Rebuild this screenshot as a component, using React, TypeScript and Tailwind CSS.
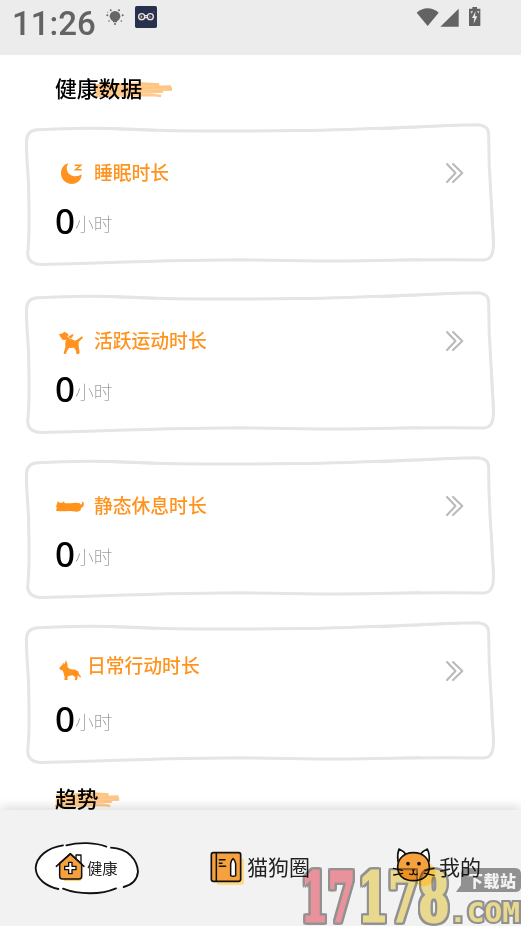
import type { ReactNode } from "react";

const cjk = "font-['Noto_Sans_CJK_SC',sans-serif]";

const MoonIcon = () => (
    <svg viewBox="123 129 90 90" className="h-[30px] w-[30px]" fill="#ff931e">
        <path d="M161 145C152 155 154 171 164 178C175 187 191 185 200 178C200 195 187 207 170 207C152 207 138 193 138 175C138 159 148 147 161 145Z" />
        <path d="M179 151H197L182 164H200" fill="none" stroke="#ff931e" strokeWidth="4.5" />
    </svg>
);

const RunningDogIcon = () => (
    <svg viewBox="123 123 90 90" className="h-[30px] w-[30px]" fill="#ff931e">
        <path d="M132 148L143 145L148 140L159 146L161 155L154 164L143 165L137 157Z" />
        <path d="M155 160L172 147L176 150L168 161L180 167L186 164L201 154L204 158L191 171L191 182L194 203L190 208L184 206L183 197L177 188L162 189L156 198L153 206L147 207L146 203L151 187L151 172Z" />
        <path d="M156 153L168 163" stroke="#fff" strokeWidth="2" />
    </svg>
);

const LyingCatIcon = () => (
    <svg viewBox="123 123 90 90" className="h-[30px] w-[30px]" fill="#ff931e">
        <path d="M126 161L128 154L134 158L142 158L147 154L149 160L166 160L184 158L194 160L198 164Q204 162 200 155L205 156Q209 163 204 170L198 175L196 182L186 185L166 183L149 184L136 184L125 183L123 179L126 174L123 170Z" />
    </svg>
);

const WalkingDogIcon = () => (
    <svg viewBox="123 123 90 90" className="h-[30px] w-[30px]" fill="#ff931e">
        <path d="M133 158L142 149L146 143L149 147L153 135L157 146L158 157L165 162L181 164L189 169L192 176L198 185L196 188L189 181L186 195L179 196L181 187L173 181L160 183L157 187L158 195L148 195L149 187L145 171L142 166L135 164Z" />
    </svg>
);

const Chevrons = () => (
    <svg
        width="20"
        height="22"
        viewBox="0 0 20 22"
        fill="none"
        stroke="#b9b9b9"
        strokeWidth="2"
        strokeLinecap="round"
        strokeLinejoin="round"
    >
        <path d="M3 2L11.5 11L3 20" />
        <path d="M9 2L18.3 11L9 20" />
    </svg>
);

const CardFrame = () => (
    <svg
        viewBox="24 122 471 145"
        className="absolute inset-0 h-full w-full"
        fill="none"
        stroke="#e5e5e5"
        strokeLinejoin="round"
        strokeLinecap="round"
    >
        <path
            strokeWidth="3"
            d="M26.5 140Q27 130.5 38 129.8C70 127.7 110 128 140 129.5C190 132 260 131 300 130.5C350 130 410 127 455 125.3L476 124.7Q488 125 488.6 133C488.7 170 490.5 190 491.5 205C491.8 225 494 235 493.3 248Q492.5 259.5 484 260L450 259.7C400 259.5 360 261 320 261L240 259.7C190 260 120 262 80 263.4L40 264.5Q27.5 263.5 27.7 253C30 230 29 210 28.7 195C29 175 26 160 26.5 140Z"
        />
        <path strokeWidth="1.5" d="M100 129L155 131M380 129.5L460 125.5M492 200L494 245M330 261.5L420 259" />
    </svg>
);

const Brush = ({ className }: { className: string }) => (
    <svg viewBox="0 0 80 18" preserveAspectRatio="none" className={`absolute ${className}`} fill="none">
        <path d="M1 5L49 3L66 4M2 8L78 6M1 10L79 8M2 13L70 10" stroke="#ffc582" strokeWidth="3.6" />
        <path d="M0 15L60 14L68 15M8 12L60 11" stroke="#ffca8e" strokeWidth="2.5" />
        <path d="M20 6L62 5M48 9L74 8M45 13L62 12" stroke="#ffdcb3" strokeWidth="0.5" />
    </svg>
);

type Item = {
    label: string;
    icon: ReactNode;
    labelClass: string;
};

const first: Item = { label: "睡眠时长", icon: <MoonIcon />, labelClass: "ml-2 pb-0.5" };

const rest: Item[] = [
    { label: "活跃运动时长", icon: <RunningDogIcon />, labelClass: "ml-2 pb-0.5" },
    { label: "静态休息时长", icon: <LyingCatIcon />, labelClass: "ml-2 pb-0.5" },
    { label: "日常行动时长", icon: <WalkingDogIcon />, labelClass: "ml-px pb-3" },
];

const DataCard = ({ item }: { item: Item }) => (
    <div className="relative h-[145px] w-[471px] pt-9 pr-[31px] pl-8">
        <CardFrame />
        <div className="flex h-[30px] items-center">
            {item.icon}
            <span className={`text-[18.8px] leading-[30px] font-medium text-[#ff931e] ${item.labelClass}`}>
                {item.label}
            </span>
            <span className="ml-auto">
                <Chevrons />
            </span>
        </div>
        <div className="mt-[13px] flex h-10 items-start">
            <span className="w-[19px] font-['Noto_Sans',sans-serif] text-[35px] leading-10 font-medium text-black">
                <span className="-ml-px">0</span>
            </span>
            <span className="mt-1 text-[18.7px] leading-9 font-thin text-[#777]">小时</span>
        </div>
    </div>
);

const StatusBar = () => (
    <header className="flex h-[55px] items-start bg-[#ececec] pl-3 text-[#636363]">
        <span className="mt-1 w-[94px] font-['Roboto',sans-serif] text-[33px] leading-[39px] font-medium">11:26</span>
        <svg width="18" height="18" viewBox="0 0 54 54" className="mt-2" fill="#666">
            <circle cx="27" cy="25" r="16" />
            <path d="M21 38H33V43H21ZM24 46H30V50H24Z" />
            <g>
                <circle cx="14" cy="7" r="3" />
                <circle cx="39" cy="7" r="3" />
                <circle cx="4" cy="22" r="3" />
                <circle cx="50" cy="22" r="3" />
                <circle cx="9" cy="39" r="2.5" />
                <circle cx="46" cy="39" r="2.5" />
                <circle cx="5" cy="13" r="1.5" />
            </g>
        </svg>
        <svg width="22" height="22" viewBox="0 0 66 66" className="mt-[6px] ml-[11px]">
            <rect width="66" height="66" rx="5" fill="#29304d" />
            <g fill="none" stroke="#e8e8e8" strokeWidth="4">
                <circle cx="20" cy="32" r="9" />
                <circle cx="46" cy="32" r="9" />
                <path d="M29 29H37M29 35H37" />
            </g>
            <path d="M17 27L23 32L17 38Z" fill="#e8c65b" />
            <path d="M43 28L50 33L43 37Z" fill="#c46b79" />
            <path d="M54 20L57 17" stroke="#aaa" strokeWidth="2" />
        </svg>
        <svg width="68" height="24" viewBox="48 18 204 72" className="mt-1.5 mr-[37px] ml-auto" fill="#636363">
            <path d="M50 38C68 20 98 20 116 38L83 78Z" />
            <path d="M176 26V80H121Z" />
            <path d="M217 21H231V26H241V78H207V26H217Z" />
            <path d="M227 34L216 54H223L221 71L232 49H225Z" fill="#ececec" />
            <path d="M211 34L219 33L215 42ZM231 34L238 32L236 41Z" fill="#cfcfcf" />
        </svg>
    </header>
);

const HouseIcon = () => (
    <svg width="30" height="30" viewBox="105 217 90 90" strokeLinejoin="round" strokeLinecap="round">
        <path d="M127 286H181L187 280V297Q184 304 176 304H133Z" fill="#ffd36b" />
        <path d="M168 245V226H183V258" fill="#fff" stroke="#111" strokeWidth="4" />
        <path d="M119 251L151 223L185 253V290Q185 298 177 298H127Q119 298 119 290Z" fill="#f6a13e" stroke="#111" strokeWidth="4.5" />
        <path d="M109 260L151 222L192 260" fill="none" stroke="#111" strokeWidth="4.5" />
        <path
            d="M146 248H156V260H168V270H156V282H146V270H134V260H146Z"
            fill="#fff"
            stroke="#111"
            strokeWidth="4"
        />
    </svg>
);

const BookIcon = () => (
    <svg width="35" height="42" viewBox="30 62 105 126" strokeLinecap="round">
        <rect x="50" y="84" width="82" height="80" rx="8" fill="#ffdc82" />
        <rect x="34" y="67" width="88" height="86" rx="6" fill="#f6a13e" stroke="#111" strokeWidth="5" />
        <path d="M49 68V152M58 88H75M58 99H66M58 108H77" stroke="#111" strokeWidth="4.5" />
        <path d="M92 136V100Q94 89 99 85Q105 89 107 100V136Q100 140 92 136Z" fill="#fff" stroke="#111" strokeWidth="4.5" />
    </svg>
);

const CatIcon = () => (
    <svg width="44" height="40" viewBox="304 22 132 120" strokeLinecap="round" strokeLinejoin="round">
        <circle cx="398" cy="102" r="37" fill="#ffdc82" />
        <path d="M322 66Q319 45 325 28Q339 34 347 45M388 45Q398 33 410 28Q418 45 415 66" fill="#fff" stroke="#111" strokeWidth="5" />
        <path d="M368 39C402 39 416 61 416 82C416 108 396 123 368 123C340 123 321 108 321 82C321 61 336 39 368 39Z" fill="#f6a13e" stroke="#111" strokeWidth="5" />
        <path d="M308 86L335 92M309 106L336 101M403 92L430 86M402 101L430 107" stroke="#111" strokeWidth="4" />
        <circle cx="352" cy="72" r="5.5" fill="#111" />
        <circle cx="385" cy="72" r="5.5" fill="#111" />
        <path d="M368 91V100Q365 108 357 103M368 100Q372 108 380 103" fill="none" stroke="#111" strokeWidth="4" />
        <path d="M363 90H373L368 96Z" fill="#111" />
    </svg>
);

const Watermark = () => (
    <svg
        viewBox="290 840 231 86"
        className="pointer-events-none absolute right-0 bottom-0 h-[86px] w-[231px] mix-blend-multiply"
    >
        {/* thick fill, then a grey outline made of four hard shadows */}
        <g
            className="[filter:drop-shadow(2px_0_0_#999)_drop-shadow(-2px_0_0_#999)_drop-shadow(0_2px_0_#999)_drop-shadow(0_-2px_0_#999)]"
            fontFamily="'DejaVu Serif', serif"
            fontWeight="bold"
            fontSize="67"
            strokeWidth="3"
        >
            <text x="301" y="921" textLength="54" lengthAdjust="spacingAndGlyphs" fill="#f79aa3" stroke="#f79aa3">
                17
            </text>
            <text x="358" y="921" textLength="91" lengthAdjust="spacingAndGlyphs" fill="#f6e597" stroke="#f6e597">
                178
            </text>
        </g>
        <text
            x="449"
            y="922"
            fontFamily="'DejaVu Sans Mono', monospace"
            fontWeight="bold"
            fontSize="26"
            textLength="71"
            lengthAdjust="spacingAndGlyphs"
            fill="#f6e597"
            stroke="#999"
            strokeWidth="4"
            paintOrder="stroke"
        >
            .COM
        </text>
        <path d="M467 868H515Q521 868 521 874V887Q521 892 515 892H456L461 885V874Q461 868 467 868Z" fill="#999" />
        <text
            x="467"
            y="887"
            fontFamily="'Noto Sans CJK SC', sans-serif"
            fontWeight="900"
            fontSize="16"
            textLength="49"
            fill="#fff"
        >
            下载站
        </text>
    </svg>
);

const TabBar = () => (
    <nav className="relative flex h-[116px] shrink-0 items-start bg-[#f2f2f2] text-[#222] shadow-[0_-3px_10px_rgba(0,0,0,0.14)]">
        <div className="relative mt-[31px] ml-[34px] flex h-[54px] w-[106px] items-center">
            <svg viewBox="42 183 318 162" className="absolute inset-0 h-full w-full" fill="none">
                <path
                    d="M138 195C180 184 240 190 270 200C320 200 354 235 354 275C354 300 330 320 288 325C240 345 175 343 128 330C80 327 48 300 47 265C48 225 95 195 138 195Z"
                    fill="#fff"
                />
                <path
                    d="M129 196C80 203 49 232 47 264C48 297 80 320 115 327M139 196C180 185 228 188 259 200M273 203C325 205 352 240 354 275C352 297 338 314 311 321M288 325C243 345 176 344 129 326"
                    stroke="#111"
                    strokeWidth="5.5"
                    strokeLinecap="round"
                />
            </svg>
            <div className="relative mb-0.5 ml-[21px] flex items-center">
                <HouseIcon />
                <span className="ml-[2px] text-[15.3px] leading-6">健康</span>
            </div>
        </div>
        <div className="mt-[41px] ml-[70px] flex">
            <BookIcon />
            <span className="-mt-px ml-[2px] text-[21px] leading-8">猫狗圈</span>
        </div>
        <div className="mt-[37px] ml-[82px] flex">
            <CatIcon />
            <span className="mt-[3px] ml-[3px] text-[21px] leading-8">我的</span>
        </div>
        <Watermark />
    </nav>
);

export default function App() {
    return (
        <div className={`flex h-[926px] w-[521px] flex-col overflow-hidden bg-white ${cjk}`}>
            <StatusBar />
            <main className="flex min-h-0 flex-1 flex-col overflow-hidden pl-6">
                <div className="relative mt-[17px] ml-[31px] h-8 w-fit">
                    <Brush className="top-[9px] left-[39px] h-[18px] w-[79px]" />
                    <h2 className="relative text-[21.8px] leading-8 font-medium text-black">健康数据</h2>
                </div>
                <section className="mt-[18px] flex flex-col gap-[23px]">
                    <DataCard item={first} />
                    <div className="flex flex-col gap-5">
                        {rest.map((item) => (
                            <DataCard key={item.label} item={item} />
                        ))}
                    </div>
                </section>
                <div className="relative mt-[17px] ml-[31px] h-8 w-fit">
                    <Brush className="top-[9px] left-0 h-[18px] w-[65px]" />
                    <h2 className="relative text-[21.8px] leading-8 font-medium text-black">趋势</h2>
                </div>
            </main>
            <TabBar />
        </div>
    );
}
